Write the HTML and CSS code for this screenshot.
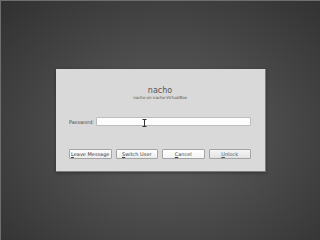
FILE: index.html
```html
<!DOCTYPE html>
<html lang="en">
<head>
    <meta charset="UTF-8">
    <meta name="viewport" content="width=device-width, initial-scale=1.0">
    <title>Unlock Screen</title>
    <link rel="stylesheet" href="styles.css">
</head>
<body>
    <div class="screen">
        <div class="dialog">
            <div class="user">nacho</div>
            <div class="host">nacho on nacho-VirtualBox</div>

            <div class="password-row">
                <label class="label" for="pw">Password:</label>
                <div class="field">
                    <input id="pw" class="input" type="password">
                    <svg class="ibeam" width="5" height="8" viewBox="0 0 5 8">
                        <path d="M0.5 0.5h4M2.5 0.5v7M0.5 7.5h4" stroke="#333" stroke-width="1" fill="none"/>
                    </svg>
                </div>
            </div>

            <div class="buttons">
                <button class="btn"><u>L</u>eave Message</button>
                <button class="btn"><u>S</u>witch User</button>
                <button class="btn btn-light"><u>C</u>ancel</button>
                <button class="btn btn-default"><u>U</u>nlock</button>
            </div>
        </div>
    </div>
</body>
</html>
```

FILE: styles.css
```css
body { margin: 0; font-family: "DejaVu Sans", sans-serif; }
.screen { width: 319px; height: 239px; border-top: 1px solid #6e6e6e; border-left: 1px solid #6e6e6e; background: radial-gradient(ellipse 75% 80% at 52% 55%, #606060 0%, #4b4b4b 45%, #2f2f2f 100%); overflow: hidden; }
.dialog { width: 210px; height: 103px; margin: 68px 0 0 55px; padding: 17px 14px 0 13px; box-sizing: border-box; background-color: #d9d9d9; border-right: 1px solid #7c7c7c; border-bottom: 1px solid #7c7c7c; box-shadow: 0 1px 3px rgba(0,0,0,0.35); color: #444; }
.user { text-align: center; font-size: 8px; line-height: 9px; color: #555; }
.host { text-align: center; font-size: 4px; line-height: 6px; color: #555; }
.password-row { display: flex; align-items: center; margin-top: 16px; height: 9px; }
.label { width: 27px; font-size: 5px; color: #444; }
.field { position: relative; flex: 1; height: 9px; }
.input { display: block; width: 100%; height: 9px; box-sizing: border-box; margin: 0; padding: 0; border: 1px solid #bdbdbd; border-radius: 1px; background-color: #fdfdfd; outline: none; }
.ibeam { position: absolute; left: 46px; top: 2px; }
.buttons { display: grid; grid-template-columns: repeat(4, 1fr); gap: 4px; margin-top: 23px; }
.btn { height: 10px; margin: 0; padding: 0; font-family: "DejaVu Sans", sans-serif; font-size: 5px; line-height: 8px; color: #3c3c3c; background: linear-gradient(#ffffff, #ececec); border: 1px solid #a4a4a4; border-radius: 1px; }
.btn-light { background: linear-gradient(#ffffff, #f4f4f4); }
.btn-default { background: linear-gradient(#f6f6f6, #e2e2e2); color: #555; }
```
